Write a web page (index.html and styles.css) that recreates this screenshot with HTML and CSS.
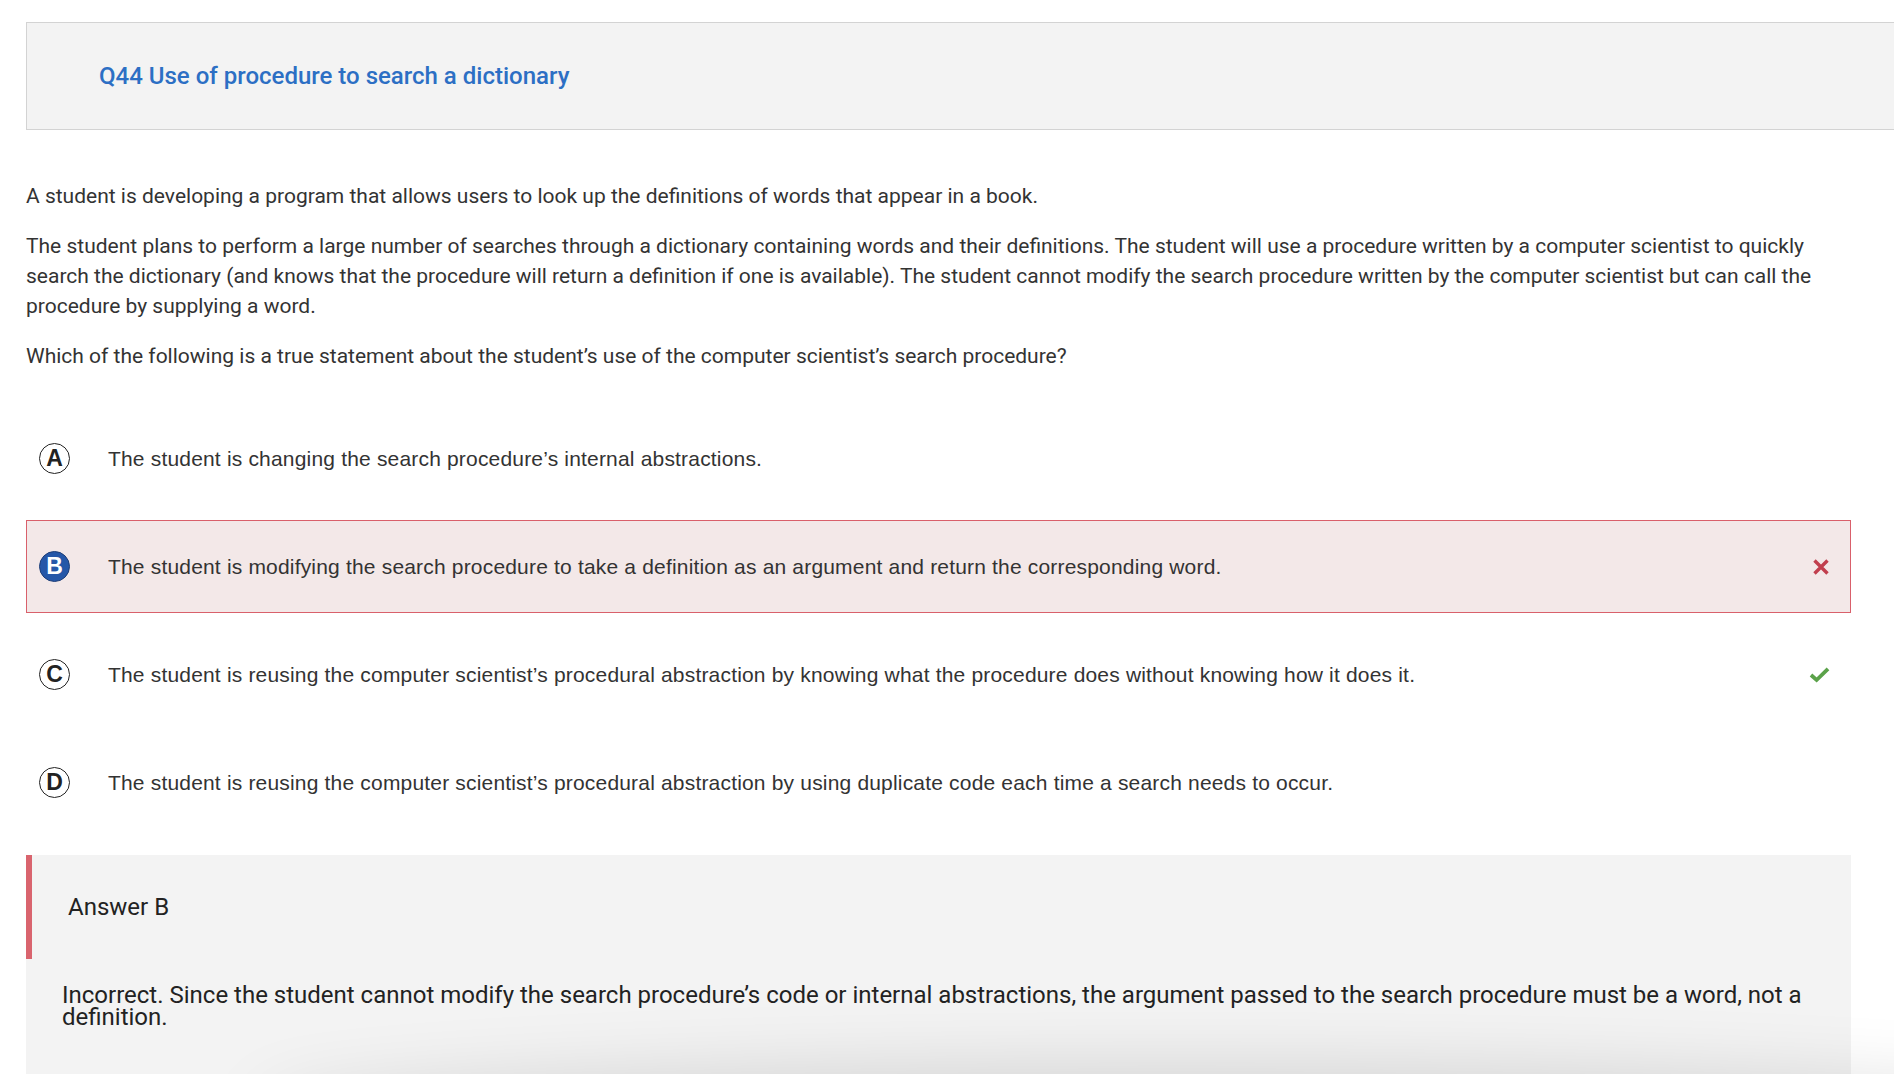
FILE: index.html
```html
<!DOCTYPE html>
<html lang="en">
<head>
<meta charset="utf-8">
<title>Q44 Use of procedure to search a dictionary</title>
<link rel="stylesheet" href="styles.css">
</head>
<body>
<div class="page">
  <header class="q-header">
    <h1 class="q-title">Q44 Use of procedure to search a dictionary</h1>
  </header>

  <section class="stem">
    <p>A student is developing a program that allows users to look up the definitions of words that appear in a book.</p>
    <p>The student plans to perform a large number of searches through a dictionary containing words and their definitions. The student will use a procedure written by a computer scientist to quickly search the dictionary (and knows that the procedure will return a definition if one is available). The student cannot modify the search procedure written by the computer scientist but can call the procedure by supplying a word.</p>
    <p>Which of the following is a true statement about the student’s use of the computer scientist’s search procedure?</p>
  </section>

  <ol class="options">
    <li class="option">
      <span class="letter">A</span>
      <span class="opt-text">The student is changing the search procedure’s internal abstractions.</span>
    </li>
    <li class="option selected wrong">
      <span class="letter filled">B</span>
      <span class="opt-text">The student is modifying the search procedure to take a definition as an argument and return the corresponding word.</span>
      <svg class="mark" width="18" height="18" viewBox="0 0 18 18"><path d="M2.5 2.5 L15.5 15.5 M15.5 2.5 L2.5 15.5" stroke="#c13f4e" stroke-width="3.4" stroke-linecap="butt"/></svg>
    </li>
    <li class="option">
      <span class="letter">C</span>
      <span class="opt-text">The student is reusing the computer scientist’s procedural abstraction by knowing what the procedure does without knowing how it does it.</span>
      <svg class="mark" width="21" height="17" viewBox="0 0 21 17"><path d="M2 9 L7.6 14 L19 2.8" fill="none" stroke="#5ba24a" stroke-width="3.8" stroke-linejoin="miter"/></svg>
    </li>
    <li class="option">
      <span class="letter">D</span>
      <span class="opt-text">The student is reusing the computer scientist’s procedural abstraction by using duplicate code each time a search needs to occur.</span>
    </li>
  </ol>

  <section class="answer">
    <div class="answer-head">Answer B</div>
    <p class="answer-body">Incorrect. Since the student cannot modify the search procedure’s code or internal abstractions, the argument passed to the search procedure must be a word, not a definition.</p>
  </section>
</div>
<div class="bottom-shade"></div>
</body>
</html>
```

FILE: styles.css
```css
html, body {
  margin: 0;
  padding: 0;
  background: #ffffff;
  overflow: hidden;
}

.page {
  padding: 22px 43px 0 26px;
  font-family: Roboto, "Liberation Sans", sans-serif;
  color: #333333;
}

.q-header {
  margin-right: -60px;
  height: 106px;
  background: #f3f3f3;
  border: 1px solid #d3d3d3;
  display: flex;
  align-items: center;
  padding-left: 72px;
}

.q-title {
  margin: 0;
  font-size: 24px;
  font-weight: 500;
  color: #2c6fc4;
  letter-spacing: 0;
}

.stem {
  padding-top: 51px;
}

.stem p {
  margin: 0 0 20px 0;
  font-size: 21px;
  line-height: 30px;
  color: #333333;
}

.options {
  list-style: none;
  margin: 41px 0 0 0;
  padding: 0;
  display: flex;
  flex-direction: column;
  gap: 15px;
}

.option {
  height: 93px;
  box-sizing: border-box;
  display: flex;
  align-items: center;
  padding: 0 20px 0 12px;
  border: 1px solid transparent;
  font-family: "Liberation Sans", Arial, sans-serif;
  font-size: 21px;
  letter-spacing: 0.18px;
  color: #333333;
}

.option.selected.wrong {
  background: #f3e8e8;
  border-color: #d9606b;
}

.letter {
  flex: 0 0 auto;
  width: 29px;
  height: 29px;
  border: 1.5px solid #222222;
  border-radius: 50%;
  display: flex;
  align-items: center;
  justify-content: center;
  font-family: "Liberation Sans", Arial, sans-serif;
  font-weight: 700;
  font-size: 23px;
  letter-spacing: 0;
  color: #222222;
  margin-right: 38px;
}

.letter.filled {
  background: #2557a8;
  border-color: #1f3f78;
  color: #ffffff;
}

.opt-text {
  flex: 1 1 auto;
}

.mark {
  flex: 0 0 auto;
  display: block;
}

.answer {
  margin-top: 26px;
  background: #f3f3f3;
  min-height: 240px;
}

.answer-head {
  height: 104px;
  box-sizing: border-box;
  border-left: 6px solid #d9646e;
  display: flex;
  align-items: center;
  padding-left: 36px;
  font-size: 24px;
  color: #222222;
}

.answer-body {
  margin: 0;
  padding: 25px 40px 0 36px;
  font-size: 24px;
  line-height: 22px;
  color: #222222;
}

.bottom-shade {
  position: fixed;
  left: 260px;
  right: -200px;
  bottom: -80px;
  height: 80px;
  box-shadow: 0 0 70px 10px rgba(0, 0, 0, 0.12);
  border-radius: 50%;
  pointer-events: none;
}
```
